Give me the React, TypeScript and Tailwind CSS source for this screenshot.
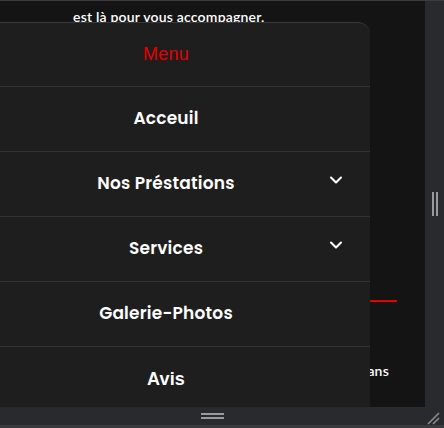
import { ChevronDown } from 'lucide-react'

const items = [
  { label: 'Acceuil', sub: false, font: "font-['Poppins','Inter',sans-serif] font-semibold" },
  { label: 'Nos Préstations', sub: true, font: "font-['Poppins','Inter',sans-serif] font-semibold" },
  { label: 'Services', sub: true, font: "font-['Poppins','Inter',sans-serif] font-semibold" },
  { label: 'Galerie-Photos', sub: false, font: "font-['Poppins','Inter',sans-serif] font-semibold" },
  { label: 'Avis', sub: false, font: "font-['Liberation_Sans',sans-serif] font-bold text-[18px]" },
]

function MenuPanel() {
  return (
    <div className="absolute top-[21px] left-[-38px] w-[408px] rounded-tr-[12px] border-t border-[#3a3a3a] bg-[#1e1e1e]">
      <div className="flex h-[64px] items-center justify-center border-b border-[#333] font-['Liberation_Sans',sans-serif] text-[18px] font-normal text-[#e50000]">
        Menu
      </div>
      {items.map((it) => (
        <div
          key={it.label}
          className={`relative flex h-[65px] items-center justify-center border-b border-[#333] text-[17px] text-white ${it.font}`}
        >
          {it.label}
          {it.sub && (
            <ChevronDown className="absolute right-[24px] top-[18px] h-[20px] w-[20px] text-white" strokeWidth={2.5} />
          )}
        </div>
      ))}
    </div>
  )
}

export default function App() {
  return (
    <div className="flex h-[428px] w-[444px] flex-col overflow-hidden border-t border-[#3c3c3c] bg-[#292a2d]">
      <div className="flex h-[406px]">
        <div className="relative h-full w-[425px] overflow-hidden bg-[#141414] font-['Lato',sans-serif] text-[14px] font-semibold tracking-[0.2px] text-white">
          <div className="pl-[73px]">
            <p className="mb-[5px] mt-[-18px] leading-[19px]">Nos équipes qualifiées, à votre écoute,</p>
            <p className="leading-[19px]">est là pour vous accompagner.</p>
          </div>
          <div className="ml-[330px] mt-[274px] h-[2px] w-[67px] bg-[#e50000]" />
          <div className="mt-[59px] flex w-[389px] justify-end leading-[19px]">
            une expérience de plus de vingt ans
          </div>
          <MenuPanel />
        </div>
        <div className="flex flex-1 items-start justify-center pt-[191px]">
          <div className="flex gap-[2px]">
            <div className="h-[24px] w-[2px] bg-[#9a9a9a]" />
            <div className="h-[24px] w-[2px] bg-[#9a9a9a]" />
          </div>
        </div>
      </div>
      <div className="relative flex h-[21px] items-start justify-center border-b-[3px] border-[#3a3b3e] pr-[19px] pt-[6px]">
        <div className="flex flex-col gap-[2px]">
          <div className="h-[2px] w-[23px] bg-[#9a9a9a]" />
          <div className="h-[2px] w-[23px] bg-[#9a9a9a]" />
        </div>
        <svg className="absolute right-[4px] top-[5px]" width="13" height="13" viewBox="0 0 13 13">
          <path d="M1 12 L12 1 M6 12 L12 6" stroke="#8a8a8a" strokeWidth="1.6" />
        </svg>
      </div>
    </div>
  )
}
